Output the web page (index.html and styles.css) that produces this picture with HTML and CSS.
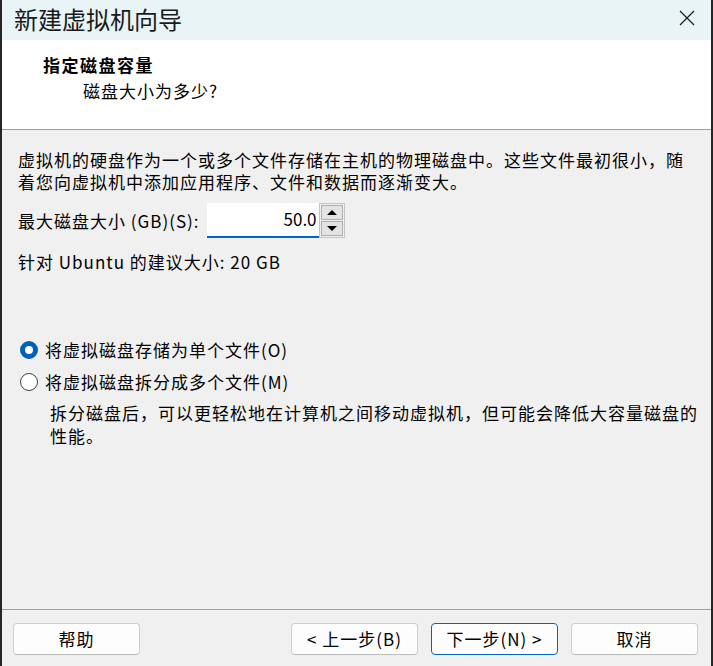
FILE: index.html
```html
<!DOCTYPE html>
<html lang="zh-CN">
<head>
<meta charset="utf-8">
<title>新建虚拟机向导</title>
<link rel="stylesheet" href="styles.css">
</head>
<body>
<div class="window">
  <div class="titlebar">
    <span class="title">新建虚拟机向导</span>
    <span class="close" aria-label="关闭">
      <svg width="16" height="16" viewBox="0 0 16 16"><path d="M1 1 L15 15 M15 1 L1 15" stroke="#1a1a1a" stroke-width="1.2" fill="none"/></svg>
    </span>
  </div>
  <div class="header">
    <div class="h-title">指定磁盘容量</div>
    <div class="h-sub">磁盘大小为多少?</div>
  </div>
  <div class="content">
    <div class="intro">
      <div class="line">虚拟机的硬盘作为一个或多个文件存储在主机的物理磁盘中。这些文件最初很小，随</div>
      <div class="line">着您向虚拟机中添加应用程序、文件和数据而逐渐变大。</div>
    </div>
    <div class="size-row">
      <span class="label">最大磁盘大小 (GB)(S):</span>
      <div class="spin">
        <div class="spin-input">50.0</div>
        <div class="spin-btns">
          <div class="spin-btn"><span class="arrow up"></span></div>
          <div class="spin-btn"><span class="arrow down"></span></div>
        </div>
      </div>
    </div>
    <div class="recommend">针对 Ubuntu 的建议大小: 20 GB</div>
    <div class="radios">
      <div class="radio-row"><span class="radio checked"></span><span>将虚拟磁盘存储为单个文件(O)</span></div>
      <div class="radio-row"><span class="radio"></span><span>将虚拟磁盘拆分成多个文件(M)</span></div>
      <div class="desc">
        <div class="line">拆分磁盘后，可以更轻松地在计算机之间移动虚拟机，但可能会降低大容量磁盘的</div>
        <div class="line">性能。</div>
      </div>
    </div>
  </div>
  <div class="footer">
    <button class="btn">帮助</button>
    <div class="spacer"></div>
    <button class="btn">&lt; 上一步(B)</button>
    <button class="btn default">下一步(N) &gt;</button>
    <button class="btn">取消</button>
  </div>
</div>
</body>
</html>
```

FILE: styles.css
```css
* { box-sizing: border-box; }
html, body { margin: 0; padding: 0; }
body {
  width: 713px;
  height: 666px;
  overflow: hidden;
  background: #2b2b2b;
  font-family: "Noto Sans CJK SC", "Noto Sans", sans-serif;
  font-size: 17px;
  letter-spacing: 1px;
  color: #000;
}
.window {
  width: 713px;
  height: 666px;
  display: flex;
  flex-direction: column;
  border-left: 2px solid #262626;
  border-right: 2px solid #262626;
  background: #f0f0f0;
}
.titlebar {
  height: 40px;
  flex: none;
  background: #e8f4f6;
  display: flex;
  align-items: center;
  justify-content: space-between;
  padding: 0 16px 0 12px;
}
.title {
  font-size: 24px;
  letter-spacing: 0;
  color: #1a1a1a;
  line-height: 1;
  margin-top: -2px;
}
.close { display: flex; margin-top: -4px; }
.header {
  height: 90px;
  flex: none;
  background: #fff;
  border-bottom: 1px solid #a0a0a0;
  padding: 14px 0 0 41px;
}
.h-title {
  font-weight: 700;
  line-height: 22px;
  letter-spacing: 1.5px;
}
.h-sub {
  line-height: 22px;
  margin-top: 4px;
  padding-left: 40px;
}
.content {
  flex: 1;
  padding: 19px 0 0 16px;
}
.line { white-space: nowrap; }
.intro { line-height: 22px; }
.size-row {
  display: flex;
  align-items: center;
  margin-top: 10px;
  height: 35px;
}
.label { line-height: 22px; margin-right: 7px; }
.spin { display: flex; height: 35px; }
.spin-input {
  width: 112px;
  height: 35px;
  background: #fff;
  border-bottom: 2px solid #0067c0;
  text-align: right;
  line-height: 31px;
  padding-right: 2px;
  letter-spacing: 0;
}
.spin-btns {
  width: 26px;
  height: 35px;
  border: 1px solid #c4c4c4;
  display: flex;
  flex-direction: column;
  padding: 1px;
  gap: 1px;
  background: #f0f0f0;
}
.spin-btn {
  flex: 1;
  background: #e3e3e3;
  border: 1px solid #adadad;
  display: flex;
  align-items: center;
  justify-content: center;
}
.arrow { width: 0; height: 0; border-left: 5px solid transparent; border-right: 5px solid transparent; }
.arrow.up { border-bottom: 5px solid #000; }
.arrow.down { border-top: 5px solid #000; }
.recommend {
  margin-top: 13px;
  line-height: 22px;
}
.radios { margin-top: 66px; }
.radio-row {
  display: flex;
  align-items: center;
  line-height: 22px;
  margin-top: 10px;
}
.radio-row:first-child { margin-top: 0; }
.radio {
  width: 18px;
  height: 18px;
  border-radius: 50%;
  border: 1px solid #404040;
  background: #fff;
  margin: 0 7px 0 2px;
  flex: none;
}
.radio.checked {
  border: 5.5px solid #005fb8;
  background: #fff;
}
.desc {
  margin: 8px 0 0 32px;
  line-height: 23px;
}
.footer {
  flex: none;
  height: 57px;
  border-top: 1px solid #a0a0a0;
  display: flex;
  padding: 13px 11px 0 11px;
  gap: 13px;
}
.spacer { flex: 1; }
.btn {
  width: 127px;
  height: 32px;
  background: #fdfdfd;
  border: 1px solid #cfcfcf;
  border-bottom-color: #bcbcbc;
  border-radius: 4px;
  font-family: inherit;
  font-size: 17px;
  letter-spacing: 1px;
  color: #000;
  padding: 0;
  line-height: 30px;
}
.btn.default { border-color: #0067c0; }
.btn:last-child { margin-right: 2px; }
```
